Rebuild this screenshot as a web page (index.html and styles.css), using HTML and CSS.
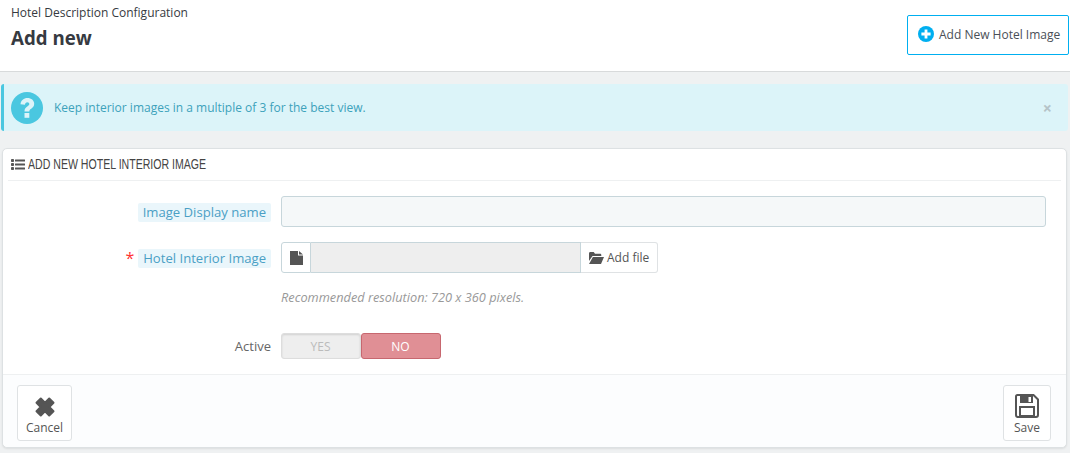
FILE: index.html
```html
<!DOCTYPE html>
<html lang="en">
<head>
<meta charset="utf-8">
<title>Add new</title>
<link rel="stylesheet" href="styles.css">
</head>
<body>
<header class="page-head">
  <div class="titles">
    <div class="crumb">Hotel Description Configuration</div>
    <h1 class="title">Add new</h1>
  </div>
  <a class="add-btn" href="#">
    <svg class="add-ic" viewBox="0 0 16 16" width="16" height="16"><circle cx="8" cy="8" r="8" fill="#00aff0"/><path d="M6.600 3.400h2.800v3.200h3.200v2.800H9.400v3.200H6.600V9.400H3.400V6.600h3.200z" fill="#fff"/></svg>
    Add New Hotel Image
  </a>
</header>

<div class="alert">
  <svg class="alert-ic" viewBox="0 0 32 32" width="32" height="32"><circle cx="16" cy="16" r="16" fill="#4ac7e0"/><path d="M9.500 12.200C9.900 8.300 12.800 6 16.400 6c3.800 0 6.800 2.400 6.800 5.800 0 2.600-1.400 3.800-3 4.900-1.300.9-1.900 1.400-1.900 2.900h-4.800c0-2.800.9-4 2.800-5.200 1.300-.9 2-1.400 2-2.400 0-1-.8-1.700-2-1.700-1.300 0-2.200.9-2.400 2.500z" fill="#dcf4f9"/><rect x="13.500" y="21" width="4.800" height="4.800" fill="#dcf4f9"/></svg>
  <span class="alert-text">Keep interior images in a multiple of 3 for the best view.</span>
  <span class="alert-close">×</span>
</div>

<section class="panel">
  <div class="panel-head">
    <svg class="list-ic" viewBox="0 0 14 11" width="14" height="11"><g fill="#555"><rect x="0" y="0" width="3" height="3" rx=".8"/><rect x="0" y="4" width="3" height="3" rx=".8"/><rect x="0" y="8" width="3" height="3" rx=".8"/><rect x="4" y=".4" width="10" height="2.200" rx=".4"/><rect x="4" y="4.400" width="10" height="2.200" rx=".4"/><rect x="4" y="8.400" width="10" height="2.200" rx=".4"/></g></svg>
    <span class="head-text">ADD NEW HOTEL INTERIOR IMAGE</span>
  </div>
  <div class="form">
    <div class="row row-name">
      <div class="label-col"><span class="hint-label">Image Display name</span></div>
      <div class="field"><input class="text-input" type="text"></div>
    </div>
    <div class="row row-file">
      <div class="label-col"><span class="req">*</span><span class="hint-label">Hotel Interior Image</span></div>
      <div class="file-group">
        <span class="file-ic">
          <svg viewBox="0 0 13 14" width="13" height="14"><path d="M0 0h8v4.500h5V14H0z M9 0l4 3.500H9z" fill="#555"/></svg>
        </span>
        <span class="file-name"></span>
        <span class="file-btn">
          <svg viewBox="0 0 15 12" width="15" height="12"><path d="M0 1.500C0 .7.500 0 1.300 0h3.400l1.300 1.700h5c.8 0 1.300.5 1.300 1.300v1H3.500L0 9zM3.900 5H15l-3 7H0z" fill="#555"/></svg>
          Add file
        </span>
      </div>
    </div>
    <p class="help">Recommended resolution: 720 x 360 pixels.</p>
    <div class="row row-active">
      <div class="label-col"><span class="plain-label">Active</span></div>
      <div class="switch">
        <span class="sw-yes">YES</span>
        <span class="sw-no">NO</span>
      </div>
    </div>
  </div>
  <footer class="panel-foot">
    <a class="foot-btn foot-cancel" href="#">
      <svg viewBox="0 0 20 20" width="20" height="20"><path d="M5.800 1.500 10 5.700l4.200-4.200 4.300 4.300-4.200 4.200 4.200 4.200-4.300 4.300-4.200-4.200-4.200 4.200-4.300-4.300 4.200-4.200-4.200-4.200z" fill="#555" stroke="#555" stroke-width="2" stroke-linejoin="round"/></svg>
      <span>Cancel</span>
    </a>
    <a class="foot-btn foot-save" href="#">
      <svg viewBox="0 0 24 24" width="24" height="24"><path d="M2.500 1h16L23 5.500V21a2 2 0 0 1-2 2H3a2 2 0 0 1-2-2V2.500A1.500 1.500 0 0 1 2.500 1z" fill="none" stroke="#555" stroke-width="2"/><rect x="5" y="2" width="13" height="7" fill="#555"/><rect x="13.500" y="3" width="2.500" height="5" fill="#fff"/><rect x="5" y="13" width="14" height="9" fill="none" stroke="#555" stroke-width="2"/></svg>
      <span>Save</span>
    </a>
  </footer>
</section>
</body>
</html>
```
FILE: styles.css
```css
* { box-sizing: border-box; }
html, body { margin: 0; padding: 0; }
body {
  width: 1070px;
  height: 453px;
  overflow: hidden;
  background: #eff1f2;
  font-family: "Open Sans", sans-serif;
  font-size: 12px;
  color: #555;
}
a { text-decoration: none; color: inherit; }

.page-head {
  height: 72px;
  background: #fff;
  border-bottom: 1px solid #d8dadb;
  display: flex;
  justify-content: space-between;
  align-items: flex-start;
  padding: 0 1px 0 11px;
}
.crumb { font-size: 12px; line-height: 16px; margin-top: 5px; color: #363a41; }
.title { margin: 4px 0 0; font-size: 18.7px; line-height: 25px; font-weight: 700; color: #363a41; }
.add-btn {
  margin-top: 15px;
  width: 162px;
  height: 40px;
  border: 1px solid #00aff0;
  border-radius: 2px;
  background: #fff;
  display: flex;
  align-items: center;
  gap: 5px;
  padding: 0 0 2px 10px;
  font-size: 12px;
  color: #4a4f57;
  white-space: nowrap;
}

.alert {
  margin: 12px 2px 0 1px;
  height: 47px;
  background: #dcf4f9;
  border-left: 3px solid #4ac7e0;
  border-radius: 3px;
  display: flex;
  align-items: center;
  padding-left: 7px;
  color: #3da2bb;
  font-size: 12px;
}
.alert-ic { flex: none; }
.alert-text { margin-left: 11px; flex: 1; }
.alert-close { margin-right: 16px; color: #b5c3c8; font-size: 16px; font-weight: 700; line-height: 16px; }

.panel {
  margin: 17px 3px 0 2px;
  height: 300px;
  background: #fff;
  border: 1px solid #dde1e3;
  border-radius: 5px;
  box-shadow: 0 1px 2px rgba(0,0,0,.08);
  display: flex;
  flex-direction: column;
}
.panel-head {
  margin: 0 5px;
  height: 32px;
  border-bottom: 1px solid #eef0f1;
  display: flex;
  align-items: center;
  gap: 3px;
  padding: 0 0 1px 3px;
  font-size: 14px;
  color: #444;
}
.head-text {
  font-family: "Liberation Sans", sans-serif;
  white-space: nowrap;
  transform: scaleX(.755);
  transform-origin: left center;
}
.form { flex: 1; padding-top: 15px; }
.row { display: flex; align-items: center; }
.label-col {
  width: 268px;
  flex: none;
  display: flex;
  justify-content: flex-end;
  align-items: center;
  gap: 4px;
}
.row-name .label-col, .row-file .label-col { padding-top: 2px; }
.hint-label {
  background: #eaf6fb;
  border-radius: 2px;
  padding: 0 5px;
  line-height: 19px;
  font-size: 13.1px;
  color: #4a9fc5;
}
.req { color: #f33; font-size: 16px; line-height: 19px; }
.plain-label { font-size: 13px; color: #666; }
.field { margin-left: 10px; width: 765px; }
.text-input {
  display: block;
  width: 100%;
  height: 31px;
  background: #f5f8f9;
  border: 1px solid #c7d6db;
  border-radius: 3px;
}
.row-file { margin-top: 15px; }
.file-group {
  margin-left: 10px;
  display: flex;
  height: 31px;
}
.file-ic {
  width: 30px;
  background: #fff;
  border: 1px solid #c7d6db;
  border-radius: 3px 0 0 3px;
  display: flex;
  align-items: center;
  justify-content: center;
}
.file-name {
  width: 270px;
  background: #eee;
  border-top: 1px solid #c7d6db;
  border-bottom: 1px solid #c7d6db;
  border-right: 1px solid #c7d6db;
}
.file-btn {
  width: 77px;
  background: #fff;
  border: 1px solid #dfe2e4;
  border-left: 0;
  border-radius: 0 3px 3px 0;
  display: flex;
  align-items: center;
  gap: 3px;
  padding-left: 8px;
  font-size: 12px;
  color: #555;
}
.help {
  margin: 15px 0 0 278px;
  line-height: 18px;
  font-size: 12.75px;
  font-style: italic;
  color: #999;
}
.row-active { margin-top: 27px; }
.switch { margin-left: 10px; display: flex; height: 26px; }
.sw-yes, .sw-no {
  width: 80px;
  display: flex;
  align-items: center;
  justify-content: center;
  padding-right: 1px;
  font-size: 12px;
  border-radius: 3px;
}
.sw-yes { background: #eee; border: 1px solid #ddd; color: #bbb; box-shadow: inset 0 1px 2px rgba(0,0,0,.12); }
.sw-no { background: #e08f95; border: 1px solid #c7676f; color: #fff; }

.panel-foot {
  height: 73px;
  background: #fcfdfe;
  border-top: 1px solid #eef0f1;
  border-radius: 0 0 5px 5px;
  display: flex;
  justify-content: space-between;
  padding: 10px 15px 0 14px;
}
.foot-btn {
  height: 56px;
  background: #fff;
  border: 1px solid #dfe2e4;
  border-radius: 3px;
  display: flex;
  flex-direction: column;
  align-items: center;
  justify-content: flex-end;
  padding-bottom: 4px;
  font-size: 12px;
  line-height: 16px;
  color: #555;
}
.foot-cancel { width: 55px; gap: 3px; }
.foot-save { width: 48px; gap: 2px; }
```
